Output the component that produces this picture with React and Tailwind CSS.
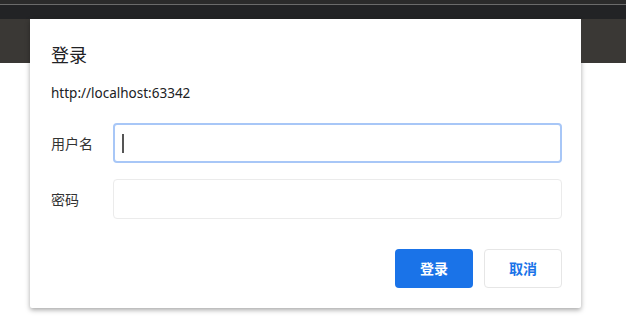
import React from 'react';

const cjk = { fontFamily: '"Noto Sans", "Noto Sans CJK SC", sans-serif' };

const LoginDialog = () => {
  return (
    <div className="w-[551px] h-[289px] bg-white shadow-[0_2px_5px_rgba(0,0,0,0.35)] rounded-b-[2px] pl-[21px] pr-[19px] flex flex-col">
      <h1 className="mt-[25px] text-[18px] leading-[22px] text-[#202124]">登录</h1>
      <p className="mt-[19px] text-[13.5px] leading-[16px] text-[#202124]">http://localhost:63342</p>

      <div className="mt-[22px] flex items-center">
        <label className="w-[62px] text-[14px] text-[#333]">用户名</label>
        <div className="flex-1 h-[40px] border-2 border-[#a8c7f7] rounded-[4px] flex items-center pl-[7px]">
          <span className="w-[2px] h-[19px] bg-[#555]" />
        </div>
      </div>

      <div className="mt-[16px] flex items-center">
        <label className="w-[62px] text-[14px] text-[#333]">密码</label>
        <div className="flex-1 h-[40px] border border-[#ebebeb] rounded-[4px]" />
      </div>

      <div className="mt-[30px] flex justify-end gap-[11px]">
        <button className="w-[78px] h-[39px] rounded-[4px] bg-[#1a73e8] text-white text-[14px] font-bold">
          登录
        </button>
        <button className="w-[78px] h-[39px] rounded-[4px] bg-white border border-[#e6e6e6] text-[#1a73e8] text-[14px] font-bold">
          取消
        </button>
      </div>
    </div>
  );
};

const App = () => {
  return (
    <div className="w-[626px] h-[328px] bg-white overflow-hidden" style={cjk}>
      <div className="h-[19px] bg-[#222325] flex flex-col">
        <div className="h-[4px] bg-[#2b2b2b]" />
        <div className="h-px bg-[#6b6b6b]" />
      </div>
      <div className="flex">
        <div className="w-[30px] h-[44px] bg-[#3a3835]" />
        <LoginDialog />
        <div className="flex-1 h-[44px] bg-[#3a3835]" />
      </div>
    </div>
  );
};

export default App;
